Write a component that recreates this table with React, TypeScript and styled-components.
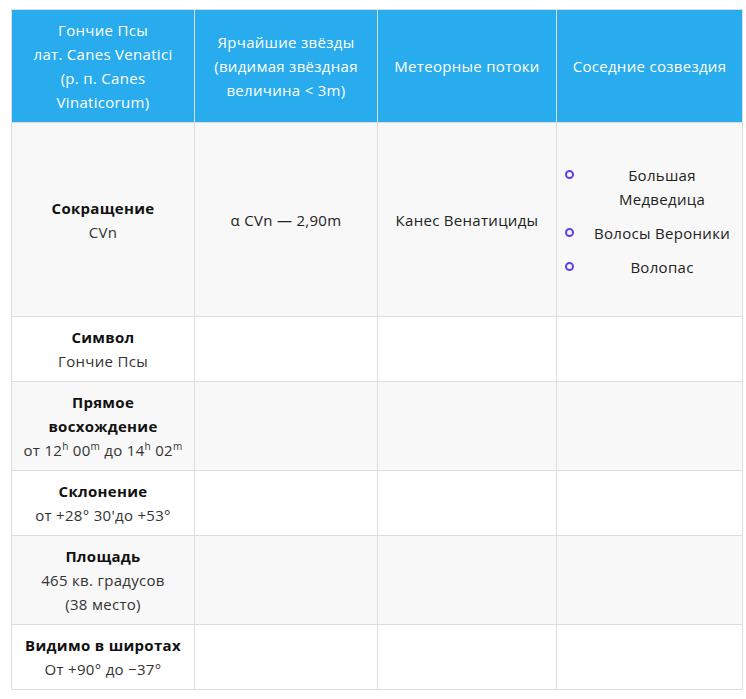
import React from "react";
import styled, { createGlobalStyle } from "styled-components";

const Global = createGlobalStyle`
  html, body { margin: 0; padding: 0; background: #ffffff; }
  body { font-family: "Open Sans", "DejaVu Sans", sans-serif; }
`;

const Page = styled.div`
  padding: 9px 5px 0 11px;
`;

const Table = styled.table`
  border-collapse: collapse;
  table-layout: fixed;
  width: 731px;
  font-size: 15px;
  letter-spacing: 0.3px;
  line-height: 24px;
  color: #222;
`;

const Col = styled.col<{ $w: number }>`
  width: ${(p) => p.$w}px;
`;

const HeadCell = styled.th`
  background: #29acee;
  color: #ffffff;
  font-weight: 400;
  text-align: center;
  vertical-align: middle;
  padding: 8px 14px;
  border: 1px solid #dddddd;
`;

const Row = styled.tr<{ $shade: boolean }>`
  background: ${(p) => (p.$shade ? "#f8f8f8" : "#ffffff")};
`;

const Cell = styled.td`
  text-align: center;
  vertical-align: middle;
  padding: 8px 8px;
  border: 1px solid #dddddd;
`;

const Label = styled.div`
  font-weight: 700;
  color: #111;
  padding: 0 4px;
`;

const Value = styled.div`
  color: #333;
`;

const List = styled.ul`
  list-style: none;
  margin: 32px 0 29px;
  padding: 0;
`;

const Item = styled.li`
  position: relative;
  padding-left: 25px;
  margin-bottom: 10px;
  &:last-child { margin-bottom: 0; }
  &::before {
    content: "";
    position: absolute;
    left: 0;
    top: 7px;
    width: 5px;
    height: 5px;
    border: 2px solid #5a40f2;
    border-radius: 50%;
  }
`;

const Sup = styled.sup`
  font-size: 10px;
  line-height: 0;
  vertical-align: 6px;
`;

type RowData = { label: React.ReactNode; value: React.ReactNode };

const rows: RowData[] = [
  { label: "Символ", value: "Гончие Псы" },
  {
    label: "Прямое восхождение",
    value: (
      <>
        от 12<Sup>h</Sup> 00<Sup>m</Sup> до 14<Sup>h</Sup> 02<Sup>m</Sup>
      </>
    ),
  },
  { label: "Склонение", value: "от +28° 30'до +53°" },
  {
    label: "Площадь",
    value: (
      <>
        465 кв. градусов
        <br />
        (38 место)
      </>
    ),
  },
  { label: "Видимо в широтах", value: "От +90° до −37°" },
];

export default function App() {
  return (
    <>
      <Global />
      <Page>
        <Table>
          <colgroup>
            <Col $w={183} />
            <Col $w={183} />
            <Col $w={179} />
            <Col $w={186} />
          </colgroup>
          <thead>
            <tr>
              <HeadCell>
                Гончие Псы
                <br />
                лат. Canes Venatici (р. п. Canes Vinaticorum)
              </HeadCell>
              <HeadCell>Ярчайшие звёзды (видимая звёздная величина &lt; 3m)</HeadCell>
              <HeadCell>Метеорные потоки</HeadCell>
              <HeadCell>Соседние созвездия</HeadCell>
            </tr>
          </thead>
          <tbody>
            <Row $shade>
              <Cell>
                <Label>Сокращение</Label>
                <Value>CVn</Value>
              </Cell>
              <Cell>α CVn — 2,90m</Cell>
              <Cell>Канес Венатициды</Cell>
              <Cell>
                <List>
                  <Item>Большая Медведица</Item>
                  <Item>Волосы Вероники</Item>
                  <Item>Волопас</Item>
                </List>
              </Cell>
            </Row>
            {rows.map((r, i) => (
              <Row key={i} $shade={i % 2 === 1}>
                <Cell>
                  <Label>{r.label}</Label>
                  <Value>{r.value}</Value>
                </Cell>
                <Cell />
                <Cell />
                <Cell />
              </Row>
            ))}
          </tbody>
        </Table>
      </Page>
    </>
  );
}
